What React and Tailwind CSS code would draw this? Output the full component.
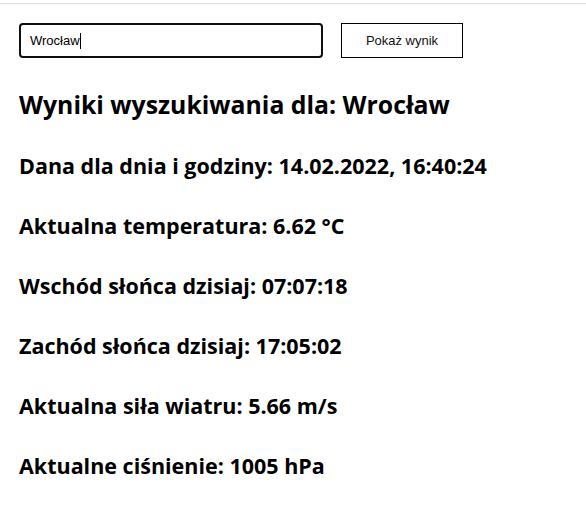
const rows = [
  "Dana dla dnia i godziny: 14.02.2022, 16:40:24",
  "Aktualna temperatura: 6.62 °C",
  "Wschód słońca dzisiaj: 07:07:18",
  "Zachód słońca dzisiaj: 17:05:02",
  "Aktualna siła wiatru: 5.66 m/s",
  "Aktualne ciśnienie: 1005 hPa",
];

const App = () => {
  return (
    <div className="bg-white min-h-[530px] font-['Open_Sans',sans-serif] text-black">
      <div className="h-[3px]" />
      <div className="border-t border-[#dcdcdc]" />

      <div className="px-[19px] pt-[19px]">
        <div className="flex items-center gap-[18px]">
          <div className="flex items-center w-[304px] h-[35px] border-2 border-[#101010] rounded-[4px] px-[9px] font-['Liberation_Sans',sans-serif] text-[13px]">
            <span>Wrocław</span>
            <span className="w-px h-[16px] bg-black" />
          </div>
          <button className="w-[122px] h-[35px] border border-black bg-white font-['Liberation_Sans',sans-serif] text-[13px] text-[#111]">
            Pokaż wynik
          </button>
        </div>

        <h2 className="mt-[31px] text-[24.8px] leading-[30px] font-bold">
          Wyniki wyszukiwania dla: Wrocław
        </h2>

        <div className="mt-[32px] flex flex-col gap-[30px]">
          {rows.map((r) => (
            <h3 key={r} className="text-[21.5px] leading-[30px] font-bold">
              {r}
            </h3>
          ))}
        </div>
      </div>
    </div>
  );
};

export default App;
